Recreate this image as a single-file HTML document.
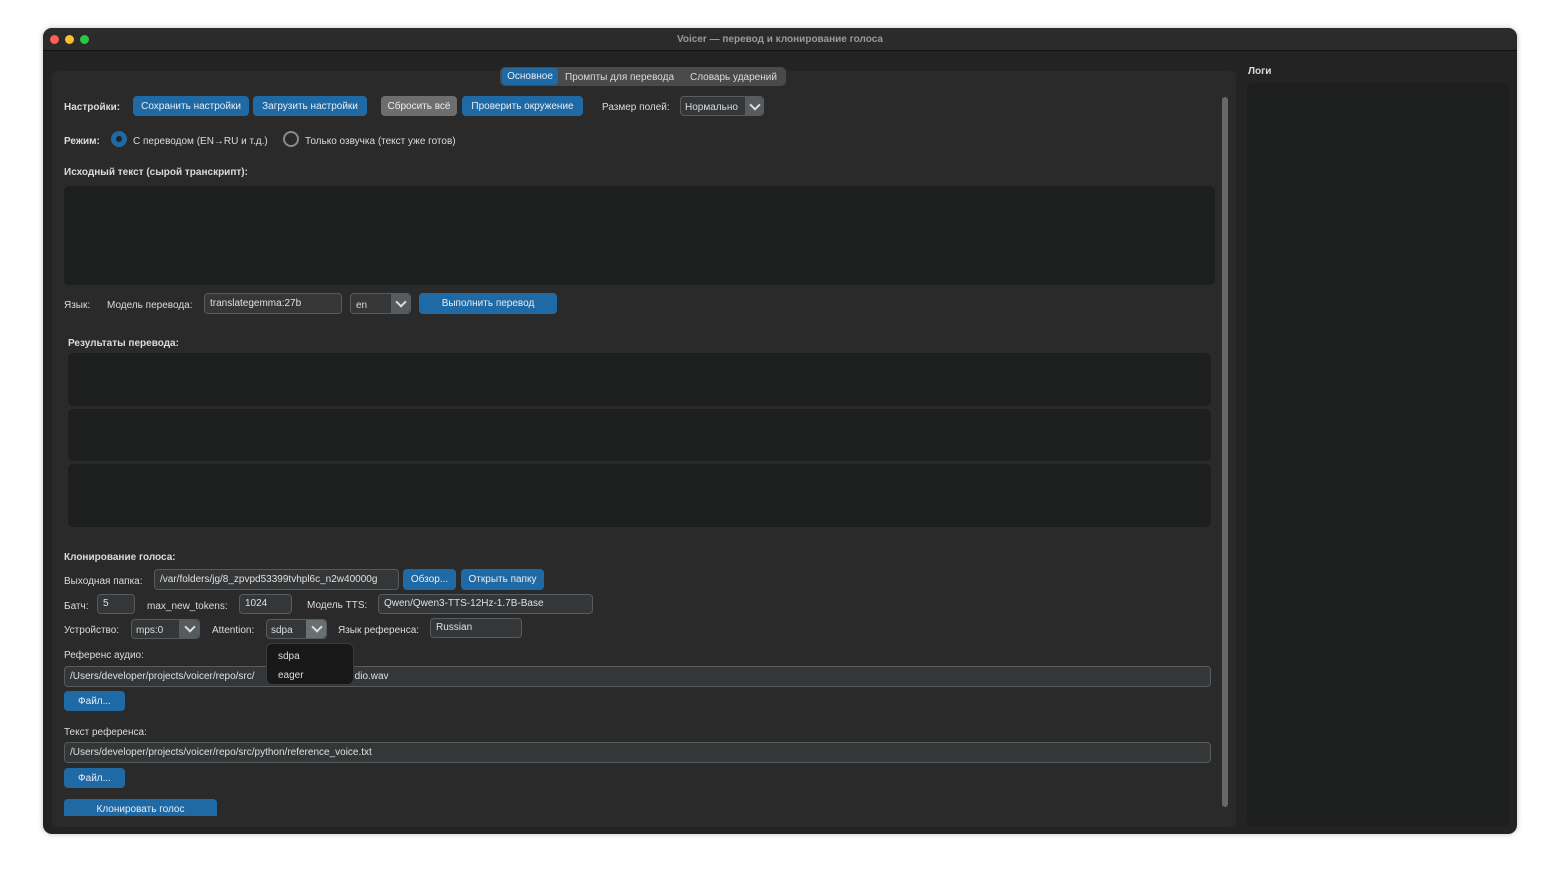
<!DOCTYPE html>
<html><head><meta charset="utf-8"><style>
body{margin:0;width:1560px;height:891px;background:#fff;position:relative;overflow:hidden;font-family:"Liberation Sans",sans-serif;font-size:10px;color:#dcdcdc}
.a{position:absolute}
.win{left:43px;top:28px;width:1474px;height:806px;background:#232323;border-radius:9px;overflow:hidden;box-shadow:0 0 6px rgba(0,0,0,.25)}
.tb{left:0;top:0;width:1474px;height:22px;background:#2b2b2b;border-bottom:1px solid #111}
.dot{width:9px;height:9px;border-radius:50%;top:7px}
.panel{left:52px;top:71px;width:1184px;height:756px;background:#2a2a2a;border-radius:6px}
.btn{background:#1f6aa5;color:#e8eef5;border-radius:4px;text-align:center;height:20px;line-height:21px;font-size:10px}
.ent{background:#343638;border:1px solid #565b5e;border-radius:4px;height:18px;line-height:18px;padding-left:5px;box-sizing:border-box;color:#e0e0e0}
.box{background:#1d1e1e;border-radius:5px}
.b{font-weight:bold}
.dd{background:#565b5e;border-radius:0 4px 4px 0}
.chev{width:6px;height:6px;border-right:2px solid #ddd;border-bottom:2px solid #ddd;transform:rotate(45deg)}
</style></head><body>
<div class="a win">
 <div class="a tb"></div>
 <div class="a dot" style="left:7px;background:#fe5f57"></div>
 <div class="a dot" style="left:22px;background:#febc2e"></div>
 <div class="a dot" style="left:37px;background:#28c840"></div>
 <div class="a b" style="left:0;width:1474px;text-align:center;top:6px;color:#9a9a9a;font-size:10px">Voicer — перевод и клонирование голоса</div>
</div>
<div class="a panel"></div>
<div class="a" style="left:500px;top:67px;width:286px;height:19px;background:#4a4a4a;border-radius:5px"></div>
<div class="a btn" style="left:502px;top:68px;width:56px;height:17px;line-height:18px;border-radius:4px">Основное</div>
<div class="a" style="left:565px;top:72px">Промпты для перевода</div>
<div class="a" style="left:690px;top:72px">Словарь ударений</div>
<div class="a b" style="left:64px;top:102px">Настройки:</div>
<div class="a btn" style="left:133px;top:96px;width:116px">Сохранить настройки</div>
<div class="a btn" style="left:253px;top:96px;width:114px">Загрузить настройки</div>
<div class="a btn" style="left:381px;top:96px;width:76px;background:#6e6e6e">Сбросить всё</div>
<div class="a btn" style="left:462px;top:96px;width:121px">Проверить окружение</div>
<div class="a" style="left:602px;top:102px">Размер полей:</div>
<div class="a" style="left:680px;top:96px;width:84px;height:20px;background:#343638;border:1px solid #565b5e;border-radius:4px;box-sizing:border-box"></div>
<div class="a" style="left:685px;top:102px">Нормально</div>
<div class="a dd" style="left:745px;top:97px;width:18px;height:18px"></div>
<div class="a chev" style="left:751px;top:101px"></div>
<div class="a b" style="left:64px;top:136px">Режим:</div>
<div class="a" style="left:111px;top:131px;width:16px;height:16px;border-radius:50%;box-sizing:border-box;border:5px solid #1f6aa5;background:#232323"></div>
<div class="a" style="left:133px;top:136px">С переводом (EN→RU и т.д.)</div>
<div class="a" style="left:283px;top:131px;width:16px;height:16px;border-radius:50%;box-sizing:border-box;border:2px solid #8a8a8a"></div>
<div class="a" style="left:305px;top:136px">Только озвучка (текст уже готов)</div>
<div class="a b" style="left:64px;top:167px">Исходный текст (сырой транскрипт):</div>
<div class="a box" style="left:64px;top:186px;width:1151px;height:99px"></div>
<div class="a" style="left:64px;top:300px">Язык:</div>
<div class="a" style="left:107px;top:300px">Модель перевода:</div>
<div class="a ent" style="left:204px;top:293px;width:138px;height:21px;line-height:19px">translategemma:27b</div>
<div class="a" style="left:350px;top:293px;width:61px;height:21px;background:#343638;border:1px solid #565b5e;border-radius:4px;box-sizing:border-box"></div>
<div class="a" style="left:356px;top:300px">en</div>
<div class="a dd" style="left:391px;top:294px;width:19px;height:19px"></div>
<div class="a chev" style="left:397px;top:298px"></div>
<div class="a btn" style="left:419px;top:293px;width:138px;height:21px;line-height:22px">Выполнить перевод</div>
<div class="a b" style="left:68px;top:338px">Результаты перевода:</div>
<div class="a box" style="left:68px;top:353px;width:1143px;height:53px"></div>
<div class="a box" style="left:68px;top:409px;width:1143px;height:52px"></div>
<div class="a box" style="left:68px;top:464px;width:1143px;height:63px"></div>
<div class="a b" style="left:64px;top:552px">Клонирование голоса:</div>
<div class="a" style="left:64px;top:576px">Выходная папка:</div>
<div class="a ent" style="left:154px;top:569px;width:245px;height:21px;line-height:19px;overflow:hidden;white-space:nowrap">/var/folders/jg/8_zpvpd53399tvhpl6c_n2w40000g</div>
<div class="a btn" style="left:403px;top:569px;width:53px;height:21px;line-height:22px">Обзор...</div>
<div class="a btn" style="left:461px;top:569px;width:83px;height:21px;line-height:22px">Открыть папку</div>
<div class="a" style="left:64px;top:601px">Батч:</div>
<div class="a ent" style="left:97px;top:594px;width:38px;height:20px;line-height:18px">5</div>
<div class="a" style="left:147px;top:601px">max_new_tokens:</div>
<div class="a ent" style="left:239px;top:594px;width:53px;height:20px;line-height:18px">1024</div>
<div class="a" style="left:307px;top:600px">Модель TTS:</div>
<div class="a ent" style="left:378px;top:594px;width:215px;height:20px;line-height:18px">Qwen/Qwen3-TTS-12Hz-1.7B-Base</div>
<div class="a" style="left:64px;top:625px">Устройство:</div>
<div class="a" style="left:131px;top:619px;width:69px;height:20px;background:#343638;border:1px solid #565b5e;border-radius:4px;box-sizing:border-box"></div>
<div class="a" style="left:136px;top:625px">mps:0</div>
<div class="a dd" style="left:179px;top:620px;width:20px;height:18px"></div>
<div class="a chev" style="left:186px;top:623px"></div>
<div class="a" style="left:212px;top:625px">Attention:</div>
<div class="a" style="left:266px;top:619px;width:61px;height:20px;background:#343638;border:1px solid #565b5e;border-radius:4px;box-sizing:border-box"></div>
<div class="a" style="left:271px;top:625px">sdpa</div>
<div class="a dd" style="left:306px;top:620px;width:20px;height:18px;background:#6a6f72"></div>
<div class="a chev" style="left:313px;top:623px"></div>
<div class="a" style="left:338px;top:625px">Язык референса:</div>
<div class="a ent" style="left:430px;top:618px;width:92px;height:20px;line-height:18px">Russian</div>
<div class="a" style="left:64px;top:650px">Референс аудио:</div>
<div class="a ent" style="left:64px;top:666px;width:1147px;height:21px;line-height:19px">/Users/developer/projects/voicer/repo/src/<span style="margin-left:89px">audio.wav</span></div>
<div class="a" style="left:266px;top:643px;width:88px;height:42px;background:#181818;border:1px solid #3a3a3a;border-radius:6px;box-sizing:border-box"></div>
<div class="a" style="left:278px;top:651px">sdpa</div>
<div class="a" style="left:278px;top:670px">eager</div>
<div class="a btn" style="left:64px;top:691px;width:61px;height:20px">Файл...</div>
<div class="a" style="left:64px;top:727px">Текст референса:</div>
<div class="a ent" style="left:64px;top:742px;width:1147px;height:21px;line-height:19px">/Users/developer/projects/voicer/repo/src/python/reference_voice.txt</div>
<div class="a btn" style="left:64px;top:768px;width:61px;height:20px">Файл...</div>
<div class="a btn" style="left:64px;top:799px;width:153px;height:17px;line-height:21px;border-radius:4px 4px 0 0">Клонировать голос</div>
<div class="a" style="left:1222px;top:97px;width:6px;height:710px;background:#686868;border-radius:3px"></div>
<div class="a b" style="left:1248px;top:66px">Логи</div>
<div class="a box" style="left:1247px;top:83px;width:262px;height:743px"></div>
</body></html>
